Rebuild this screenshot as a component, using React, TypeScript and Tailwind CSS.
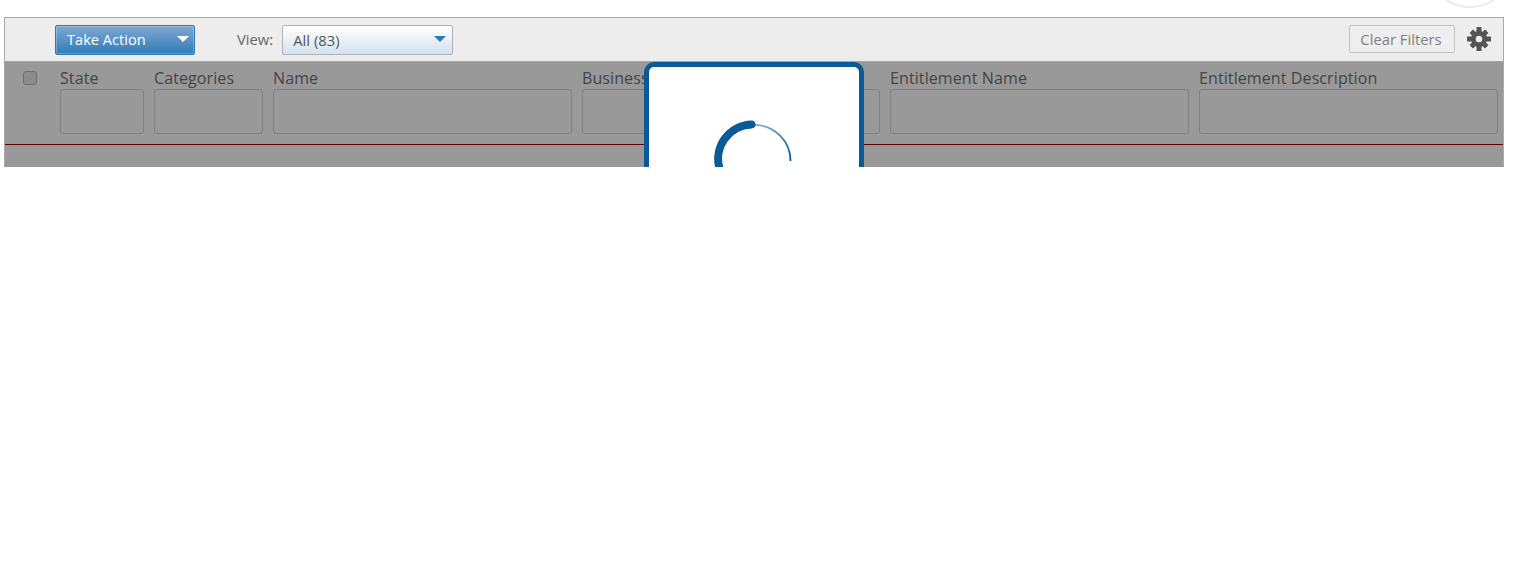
const columns = [
  { label: "State", width: "w-[84px]" },
  { label: "Categories", width: "w-[109px]" },
  { label: "Name", width: "w-[299px]" },
  { label: "Business Application", width: "w-[144px]" },
  { label: "Application", width: "w-[144px]" },
  { label: "Entitlement Name", width: "w-[299px]" },
  { label: "Entitlement Description", width: "w-[299px]" },
];

function Caret({ className }: { className: string }) {
  return <span className={`w-0 h-0 border-x-[6.5px] border-x-transparent border-t-[6px] ${className}`} />;
}

function Gear() {
  return (
    <svg width="24" height="24" viewBox="0 0 24 24" className="mt-[-2px]">
      <g fill="#555555">
        <circle cx="12" cy="12" r="8" />
        <rect x="9.5" y="0" width="5" height="24" rx="0.5" />
        <rect x="0" y="9.5" width="24" height="5" rx="0.5" />
        <rect x="9.5" y="1" width="5" height="22" rx="0.5" transform="rotate(45 12 12)" />
        <rect x="9.5" y="1" width="5" height="22" rx="0.5" transform="rotate(-45 12 12)" />
      </g>
      <circle cx="12" cy="12" r="3.3" fill="#ededed" />
    </svg>
  );
}

export default function App() {
  return (
    <div className="relative h-[574px] overflow-hidden bg-white font-['Open_Sans',sans-serif]">
      <div className="absolute left-[1427px] top-[-78px] w-[86px] h-[86px] rounded-full border-2 border-[#ebebeb]" />
      <div className="pt-[17px] pl-[4px]">
        <div className="relative w-[1500px] h-[150px] overflow-hidden border-x border-t border-[#aaaaaa] flex flex-col">
          <div className="h-[44px] shrink-0 bg-[#ededed] border-b border-[#a4a4a4] flex items-center pl-[50px] pr-[12px]">
            <button className="w-[140px] h-[30px] mt-[1px] flex items-center justify-between pl-[11px] pr-[5px] rounded-[2px] border border-[#2a7ab5] bg-gradient-to-b from-[#7fa8d0] to-[#2a7cb8] shadow-[inset_0_0_0_1px_rgba(255,255,255,0.25)] text-[14.6px] text-white">
              <span>Take Action</span>
              <Caret className="border-t-white mt-[-3px]" />
            </button>
            <span className="ml-[42px] mt-[-1px] text-[14.8px] text-[#666666]">View:</span>
            <div className="ml-[9px] w-[171px] h-[30px] mt-[1px] flex items-center justify-between pl-[10px] pr-[6px] rounded-[2px] border border-[#b0b0b0] bg-gradient-to-b from-white to-[#d3e2ee] text-[14.8px] text-[#555555]">
              <span>All (83)</span>
              <Caret className="border-t-[#2a7cb8] mt-[-3px]" />
            </div>
            <div className="ml-auto flex items-center gap-[12px]">
              <button className="w-[106px] h-[28px] mt-[-1px] pr-[2px] rounded-[2px] border border-[#c4c4c4] bg-[#eeeeee] text-[14.8px] text-[#808080]">
                Clear Filters
              </button>
              <Gear />
            </div>
          </div>
          <div className="relative flex-1 bg-[#999999]">
            <div className="h-[83px] flex border-b border-[#5e0000]">
              <div className="w-[55px] shrink-0 pl-[18px] pt-[9px]">
                <div className="w-[14px] h-[14px] rounded-[3px] border border-[#6e6e6e] bg-[#8c8c8c]" />
              </div>
              <div className="flex gap-[10px] pt-[6px]">
                {columns.map((c) => (
                  <div key={c.label} className={`${c.width} shrink-0`}>
                    <div className="h-[21px] text-[16px] tracking-[0.1px] leading-[21px] whitespace-nowrap text-[#444444]">{c.label}</div>
                    <div className="h-[45px] rounded-[3px] border border-[#808080]" />
                  </div>
                ))}
              </div>
            </div>
          </div>
          <div className="absolute left-[639px] top-[44px] w-[220px] h-[200px] rounded-[10px] border-[5px] border-[#0a5a96] bg-white">
            <svg className="absolute left-[65px] top-[53px]" width="80" height="80" viewBox="0 0 80 80" fill="none">
              <defs>
                <linearGradient id="thin" x1="0" y1="0" x2="1" y2="1">
                  <stop offset="0" stopColor="#0a5a96" stopOpacity="0.45" />
                  <stop offset="1" stopColor="#0a5a96" />
                </linearGradient>
              </defs>
              <path d="M41 5 A36 36 0 0 1 76.5 41" stroke="url(#thin)" strokeWidth="1.8" />
              <path d="M6 50 A34.5 34.5 0 0 1 37.5 4.5" stroke="#0a5a96" strokeWidth="8" strokeLinecap="round" />
            </svg>
          </div>
        </div>
      </div>
    </div>
  );
}
